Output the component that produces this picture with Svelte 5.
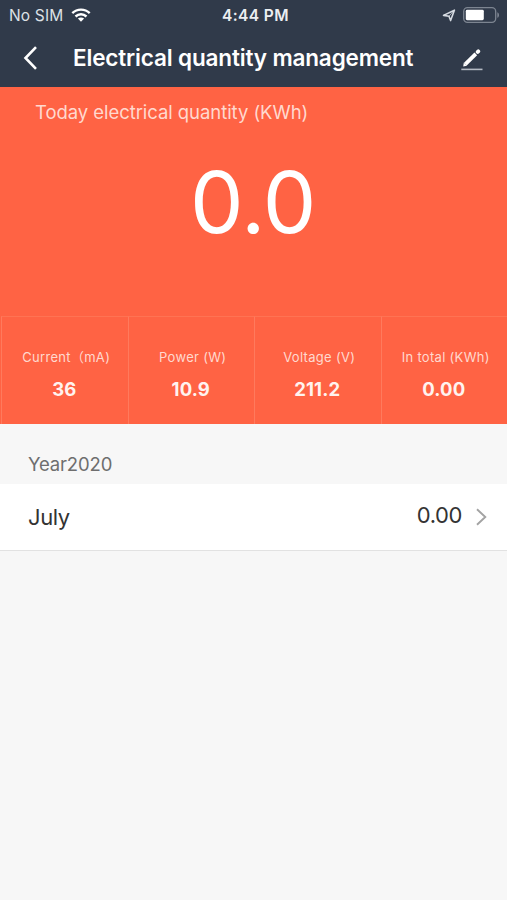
<script>
  const today = '0.0';

  const stats = [
    { label: 'Current（mA)', value: '36' },
    { label: 'Power (W)', value: '10.9' },
    { label: 'Voltage (V)', value: '211.2' },
    { label: 'In total (KWh)', value: '0.00' }
  ];

  const years = [
    { year: 2020, months: [{ name: 'July', total: '0.00' }] }
  ];
</script>

<div class="screen">
  <header>
    <div class="status-bar">
      <div class="carrier">
        <span>No SIM</span>
        <svg width="20" height="14" viewBox="0 0 20 14" fill="none" stroke="#fff" stroke-width="2.4">
          <path d="M1.3 5.2C6.2 0.4 13.8 0.4 18.7 5.2" />
          <path d="M4.5 8.5C7.7 5.5 12.3 5.5 15.5 8.5" />
          <path d="M10 13.7L6.9 10.6C8.7 9 11.3 9 13.1 10.6Z" fill="#fff" stroke="none" />
        </svg>
      </div>
      <span class="clock">4:44 PM</span>
      <div class="indicators">
        <svg width="14" height="13" viewBox="0 0 14 13" fill="none" stroke="#d5dae1" stroke-width="1.6" stroke-linejoin="round">
          <path d="M1.5 6.4L12.4 1.2L8.6 11.6L7 7.2Z" />
          <path d="M7 7.2L12.4 1.2" stroke-width="0.7" />
        </svg>
        <svg class="battery" width="37" height="16" viewBox="0 0 37 16">
          <rect x="0.7" y="0.7" width="32" height="14.6" rx="3.8" fill="none" stroke="#7d8591" stroke-width="1.3" />
          <rect x="2.8" y="2.8" width="18" height="10.4" rx="1.4" fill="#fff" />
          <path d="M34.3 5.2C36.6 6 36.6 10 34.3 10.8Z" fill="#7d8591" />
        </svg>
      </div>
    </div>
    <nav>
      <svg class="back" width="14" height="24" viewBox="0 0 14 24" fill="none" stroke="#fff" stroke-width="2.6">
        <path d="M13 1.2L2.5 12L13 22.8" />
      </svg>
      <h1>Electrical quantity management</h1>
      <svg class="edit" width="22" height="22" viewBox="0 0 22 22" fill="none" stroke="#fff">
        <path d="M4.4 15.2L14.8 4.8" stroke-width="3.8" />
        <path d="M2.2 17.4L2.8 13.6L6 16.8Z" fill="#fff" stroke="none" />
        <path d="M16.7 2.9L17.3 2.3" stroke-width="3.8" stroke-linecap="round" />
        <path d="M0.3 20.4H21.5" stroke="#b4bac3" stroke-width="1.6" />
      </svg>
    </nav>
  </header>

  <section class="today">
    <p class="caption">Today electrical quantity (KWh)</p>
    <p class="amount">{today}</p>
  </section>

  <section class="stats">
    {#each stats as stat}
      <div class="stat">
        <span class="label">{stat.label}</span>
        <span class="value">{stat.value}</span>
      </div>
    {/each}
  </section>

  {#each years as group}
    <h2>Year{group.year}</h2>
    {#each group.months as month}
      <div class="row">
        <span class="month">{month.name}</span>
        <span class="total">{month.total}</span>
        <svg width="11" height="18" viewBox="0 0 11 18" fill="none" stroke="#a3a3a3" stroke-width="1.9">
          <path d="M1 1.2L9.3 9L1 16.8" />
        </svg>
      </div>
    {/each}
  {/each}
</div>

<style>
  :global(body) {
    margin: 0;
    background: #f7f7f7;
  }

  .screen {
    height: 900px;
    overflow: hidden;
    background: #f7f7f7;
    font-family: Inter, 'Noto Sans CJK SC', sans-serif;
    color: #fff;
  }

  h1,
  h2,
  p {
    margin: 0;
    font-weight: 400;
  }

  svg {
    display: block;
    flex: none;
  }

  header {
    height: 87px;
    background: #303a4a;
  }

  .status-bar {
    display: grid;
    grid-template-columns: 1fr auto 1fr;
    align-items: center;
    height: 30px;
    padding: 0 7px 0 9px;
    font-size: 15.5px;
  }

  .carrier,
  .indicators {
    display: flex;
    align-items: center;
  }

  .carrier {
    gap: 8px;
    letter-spacing: 0.15px;
    color: #dde1e6;
  }

  .clock {
    padding-left: 2px;
    font-weight: 600;
    letter-spacing: 0.4px;
    color: #eceef1;
  }

  .indicators {
    justify-content: flex-end;
    gap: 7px;
  }

  nav {
    display: flex;
    align-items: center;
    height: 56px;
    padding: 0 24px 0 23px;
  }

  h1 {
    flex: 1;
    margin: -2px 0 0 36px;
    font-size: 22.5px;
    font-weight: 600;
    letter-spacing: -0.15px;
    white-space: nowrap;
  }

  .edit {
    margin-top: 4px;
  }

  .today {
    height: 229px;
    background: #ff6344;
  }

  .caption {
    padding: 12px 0 0 35px;
    font-size: 18.5px;
    line-height: 26px;
    letter-spacing: -0.06px;
    color: #ffd9cf;
  }

  .amount {
    margin-top: 21px;
    padding-right: 1px;
    font-size: 85px;
    font-weight: 400;
    line-height: 114px;
    letter-spacing: -0.5px;
    text-align: center;
  }

  .stats {
    display: grid;
    grid-template-columns: repeat(4, 1fr);
    height: 108px;
    padding-left: 1px;
    background: #ff6344;
  }

  .stat {
    display: flex;
    flex-direction: column;
    align-items: center;
    padding-top: 30px;
    border-top: 1px solid #ff7353;
    border-left: 1px solid #ff7a5d;
  }

  .label {
    padding-left: 3px;
    font-size: 13px;
    line-height: 20px;
    letter-spacing: 0.3px;
    white-space: nowrap;
    color: #ffd9cf;
  }

  .value {
    margin-top: 9px;
    padding-right: 1px;
    font-size: 18.5px;
    font-weight: 700;
    line-height: 26px;
    letter-spacing: 0.1px;
    color: #fff3ef;
  }

  h2 {
    height: 60px;
    padding-left: 28px;
    box-sizing: border-box;
    padding-top: 27px;
    font-size: 18.5px;
    line-height: 26px;
    letter-spacing: -0.15px;
    color: #6e6e6e;
  }

  .row {
    display: flex;
    align-items: center;
    height: 67px;
    padding: 0 20px 0 28px;
    border-bottom: 1px solid #e2e2e2;
    box-sizing: border-box;
    background: #fff;
    font-size: 22px;
    letter-spacing: -0.4px;
    color: #333;
  }

  .month {
    flex: 1;
  }

  .total {
    margin: -4px 14px 0 0;
  }
</style>
